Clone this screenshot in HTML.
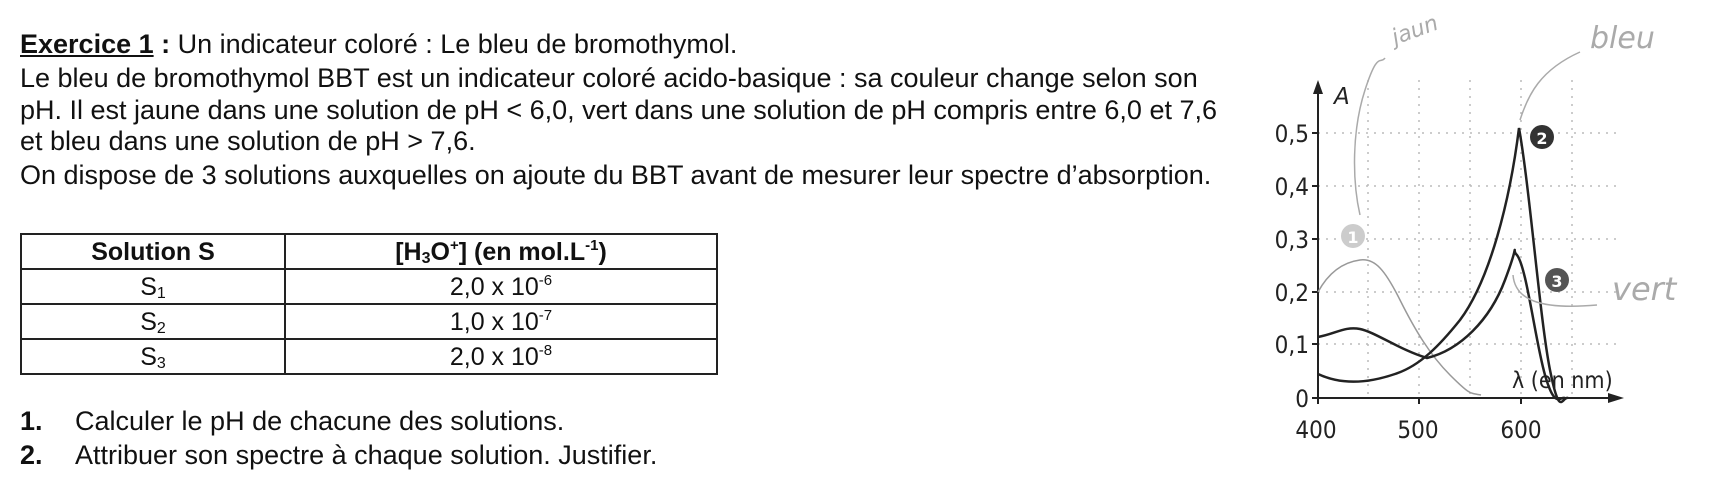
<!DOCTYPE html>
<html><head><meta charset="utf-8"><style>
html,body{margin:0;padding:0;background:#fff;}
body{width:1726px;height:493px;position:relative;overflow:hidden;font-family:"Liberation Sans",sans-serif;color:#111;}
.t{position:absolute;left:20px;font-size:27px;white-space:nowrap;line-height:30px;transform-origin:0 0;}
table{position:absolute;left:20px;top:233px;width:698px;border-collapse:collapse;font-size:25px;}
td{border:2px solid #222;text-align:center;height:33px;padding:0;line-height:30px;}
sub{font-size:16px;vertical-align:-3px;line-height:0}
sup{font-size:15px;vertical-align:10px;line-height:0}
svg{position:absolute;left:0;top:0}
</style></head><body>
<div class="t" style="top:29px"><b><u>Exercice 1</u> :</b> Un indicateur coloré : Le bleu de bromothymol.</div>
<div class="t" style="top:63px">Le bleu de bromothymol BBT est un indicateur coloré acido-basique : sa couleur change selon son</div>
<div class="t" style="top:95px">pH. Il est jaune dans une solution de pH &lt; 6,0, vert dans une solution de pH compris entre 6,0 et 7,6</div>
<div class="t" style="top:126px">et bleu dans une solution de pH &gt; 7,6.</div>
<div class="t" style="top:160px">On dispose de 3 solutions auxquelles on ajoute du BBT avant de mesurer leur spectre d’absorption.</div>
<table>
<tr><td style="width:262px"><b>Solution S</b></td><td><b>[H<sub>3</sub>O<sup>+</sup>] (en mol.L<sup>-1</sup>)</b></td></tr>
<tr><td>S<sub>1</sub></td><td>2,0 x 10<sup>-6</sup></td></tr>
<tr><td>S<sub>2</sub></td><td>1,0 x 10<sup>-7</sup></td></tr>
<tr><td>S<sub>3</sub></td><td>2,0 x 10<sup>-8</sup></td></tr>
</table>
<div class="t" style="top:406px"><b>1.</b></div><div class="t" style="top:406px;left:75px">Calculer le pH de chacune des solutions.</div>
<div class="t" style="top:440px"><b>2.</b></div><div class="t" style="top:440px;left:75px">Attribuer son spectre à chaque solution. Justifier.</div>
<svg width="1726" height="493" viewBox="0 0 1726 493">
<g stroke="#bbb" stroke-width="1.5" stroke-dasharray="2 6" fill="none">
<path d="M1368 80V398M1419 80V398M1470 80V398M1521 80V398M1572 80V398M1318 133H1620M1318 186H1620M1318 239H1620M1318 292H1620M1318 344H1620"/>
</g>
<g stroke="#222" stroke-width="2" fill="none">
<path d="M1318 404V84"/><path d="M1312 398H1618"/>
<path d="M1312 133h6M1312 186h6M1312 239h6M1312 292h6M1312 344h6M1419 398v6M1521 398v6"/>
</g>
<path d="M1313 94L1318 80L1323 94Z" fill="#222"/>
<path d="M1608 393L1624 398L1608 403Z" fill="#222"/>
<g font-family="'DejaVu Sans Condensed','DejaVu Sans',sans-serif" font-size="24" fill="#222" text-anchor="end">
<text x="1309" y="142">0,5</text><text x="1309" y="195">0,4</text><text x="1309" y="248">0,3</text><text x="1309" y="301">0,2</text><text x="1309" y="353">0,1</text><text x="1309" y="407">0</text>
</g>
<g font-family="'DejaVu Sans Condensed','DejaVu Sans',sans-serif" font-size="24" fill="#222" text-anchor="middle">
<text x="1316" y="438">400</text><text x="1418" y="438">500</text><text x="1521" y="438">600</text>
</g>
<text x="1334" y="104" font-family="'DejaVu Sans',sans-serif" font-style="italic" font-size="23" fill="#222">A</text>
<text x="1512" y="388" font-family="'DejaVu Sans Condensed','DejaVu Sans',sans-serif" font-size="23" fill="#222">λ (en nm)</text>
<path d="M1318 292C1330 270 1345 262 1360 260S1385 270 1400 300S1430 355 1450 375S1470 393 1481 395" stroke="#999" stroke-width="1.5" fill="none"/>
<path d="M1318 374C1335 382 1360 386 1395 374C1420 366 1440 345 1460 320C1490 280 1510 200 1519 128C1530 190 1540 320 1550 370S1562 396 1568 398" stroke="#222" stroke-width="2.5" fill="none"/>
<path d="M1318 337C1335 334 1345 326 1360 329S1400 350 1427 358C1460 350 1490 320 1505 280S1512 250 1516 254C1526 262 1535 340 1545 375S1560 396 1565 398" stroke="#222" stroke-width="2.5" fill="none"/>
<circle cx="1542" cy="137" r="12" fill="#333"/><text x="1542" y="144" font-family="'DejaVu Sans',sans-serif" font-weight="bold" font-size="16" fill="#fff" text-anchor="middle">2</text>
<circle cx="1557" cy="280" r="12" fill="#555"/><text x="1557" y="287" font-family="'DejaVu Sans',sans-serif" font-weight="bold" font-size="16" fill="#fff" text-anchor="middle">3</text>
<circle cx="1353" cy="236" r="12" fill="#ccc"/><text x="1353" y="243" font-family="'DejaVu Sans',sans-serif" font-weight="bold" font-size="16" fill="#fff" text-anchor="middle">1</text>
<g stroke="#aaa" stroke-width="1.5" fill="none">
<path d="M1360 215C1352 180 1352 130 1365 90S1380 65 1385 58"/>
<path d="M1520 120C1528 95 1540 70 1580 52"/>
<path d="M1513 275C1515 300 1540 310 1597 305"/>
</g>
<g font-family="'DejaVu Sans',sans-serif" fill="#aaa" font-style="italic">
<text x="1395" y="45" font-size="22" transform="rotate(-20 1395 45)">jaun</text>
<text x="1590" y="48" font-size="30">bleu</text>
<text x="1612" y="300" font-size="32">vert</text>
</g>
</svg>
</body></html>
